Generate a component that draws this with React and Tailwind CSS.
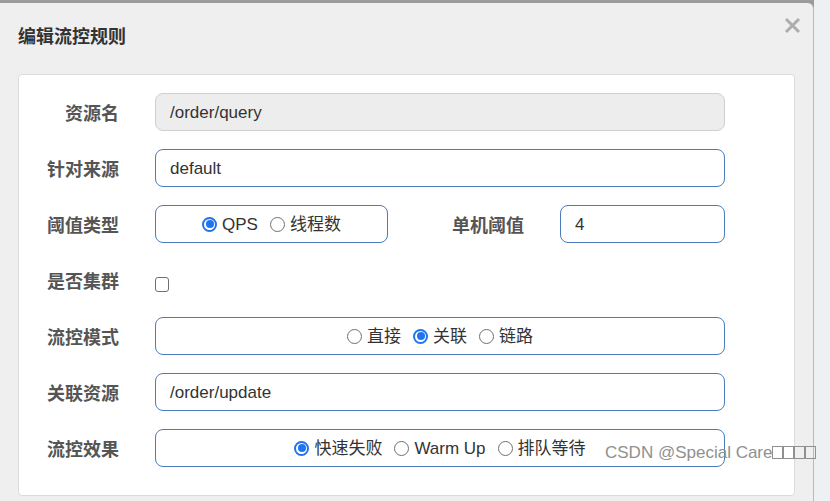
import React from "react";

const font = { fontFamily: '"Liberation Sans", "Noto Sans CJK SC", sans-serif' };

function Radio({ checked, label }) {
  return (
    <span className="flex items-center gap-[5px]">
      {checked ? (
        <span className="w-[15px] h-[15px] rounded-full border-2 border-[#1f74ef] bg-white flex items-center justify-center">
          <span className="w-[8px] h-[8px] rounded-full bg-[#1f74ef]" />
        </span>
      ) : (
        <span className="w-[15px] h-[15px] rounded-full border border-[#6f6f6f] bg-white" />
      )}
      <span className="text-[17px] text-[#333] leading-none pt-[1px]">{label}</span>
    </span>
  );
}

function Label({ children, className = "" }) {
  return (
    <div className={"text-right text-[18px] font-bold text-[#555] leading-none pt-[3px] " + className}>
      {children}
    </div>
  );
}

function Box({ children, className = "", gray = false }) {
  return (
    <div
      className={
        "h-[38px] rounded-[8px] border flex items-center " +
        (gray ? "bg-[#ededed] border-[#cfcfcf] " : "bg-white border-[#4a7bbd] ") +
        className
      }
    >
      {children}
    </div>
  );
}

function TextInput({ value, gray }) {
  return (
    <Box gray={gray} className="flex-1 px-[14px]">
      <span className="text-[17px] text-[#333] leading-none">{value}</span>
    </Box>
  );
}

function Row({ label, children }) {
  return (
    <div className="flex items-center h-[38px]">
      <Label className="w-[100px]">{label}</Label>
      <div className="ml-[36px] flex-1 flex items-center">{children}</div>
    </div>
  );
}

export default function App() {
  return (
    <div className="w-[830px] h-[501px] bg-[#eef0f4] relative overflow-hidden" style={font}>
      <div className="w-[814px] bg-[#9b9b9b] pt-[3px] h-[501px]">
        <div className="relative bg-[#efefef] rounded-tr-[6px] border-r border-[#b9b9b9] h-[498px] flex flex-col">
          <div className="h-[71px] pl-[18px] pb-[3px] flex items-center">
            <span className="text-[18px] font-bold text-[#333] leading-none">编辑流控规则</span>
          </div>
          <svg
            className="absolute left-[784px] top-[14px]"
            width="17"
            height="17"
            viewBox="0 0 17 17"
          >
            <path d="M2 2 L15 15 M15 2 L2 15" stroke="#adadad" strokeWidth="3" />
          </svg>
          <div className="ml-[18px] w-[777px] h-[422px] bg-white border border-[#dcdcdc] rounded-[4px] pt-[18px] pr-[69px] flex flex-col gap-[18px]">
            <Row label="资源名">
              <TextInput value="/order/query" gray />
            </Row>
            <Row label="针对来源">
              <TextInput value="default" />
            </Row>
            <Row label="阈值类型">
              <Box className="w-[233px] justify-center gap-[12px]">
                <Radio checked label="QPS" />
                <Radio label="线程数" />
              </Box>
              <Label className="w-[136px]">单机阈值</Label>
              <div className="ml-[36px] flex-1 flex">
                <TextInput value="4" />
              </div>
            </Row>
            <Row label="是否集群">
              <span className="mt-[8px] w-[14px] h-[15px] rounded-[3px] border border-[#707070] bg-white" />
            </Row>
            <Row label="流控模式">
              <Box className="flex-1 justify-center gap-[12px]">
                <Radio label="直接" />
                <Radio checked label="关联" />
                <Radio label="链路" />
              </Box>
            </Row>
            <Row label="关联资源">
              <TextInput value="/order/update" />
            </Row>
            <Row label="流控效果">
              <Box className="flex-1 justify-center gap-[12px]">
                <Radio checked label="快速失败" />
                <Radio label="Warm Up" />
                <Radio label="排队等待" />
              </Box>
            </Row>
          </div>
        </div>
      </div>
      <div className="absolute left-[605px] top-[444px] flex items-center text-[17px] text-[#909090] leading-none">
        <span>CSDN @Special Care</span>
        <span className="flex">
          <span className="w-[11px] h-[13px] border border-[#909090]" />
          <span className="w-[11px] h-[13px] border border-[#909090]" />
          <span className="w-[11px] h-[13px] border border-[#909090]" />
          <span className="w-[11px] h-[13px] border border-[#909090]" />
        </span>
      </div>
    </div>
  );
}
